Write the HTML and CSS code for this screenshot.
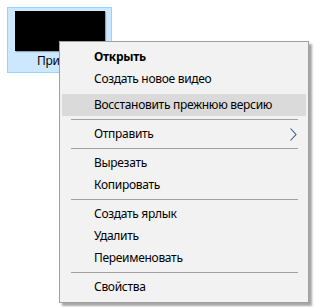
FILE: index.html
```html
<!DOCTYPE html>
<html lang="ru">
<head>
<meta charset="utf-8">
<link rel="stylesheet" href="styles.css">
</head>
<body>
<div class="desktop">
  <div class="icon">
    <div class="thumb"></div>
    <div class="label">Пример</div>
  </div>
  <div class="menu">
    <div class="item bold">Открыть</div>
    <div class="item">Создать новое видео</div>
    <div class="item hover gap">Восстановить прежнюю версию</div>
    <div class="sep"></div>
    <div class="item sub">Отправить
      <svg class="arrow" width="7" height="13" viewBox="0 0 7 13"><polyline points="0.5,0.5 6,6.5 0.5,12.5" fill="none" stroke="#2f5f8f" stroke-width="1.1"/></svg>
    </div>
    <div class="sep"></div>
    <div class="item">Вырезать</div>
    <div class="item">Копировать</div>
    <div class="sep"></div>
    <div class="item">Создать ярлык</div>
    <div class="item">Удалить</div>
    <div class="item">Переименовать</div>
    <div class="sep"></div>
    <div class="item">Свойства</div>
  </div>
</div>
</body>
</html>
```
FILE: styles.css
```css
html, body {
  margin: 0;
  padding: 0;
  background: #ffffff;
}
body {
  font-family: "Noto Sans", "Open Sans", sans-serif;
  font-size: 12px;
  color: #000;
  letter-spacing: -0.3px;
}
.desktop {
  position: relative;
  width: 315px;
  height: 307px;
  overflow: hidden;
}
.icon {
  position: absolute;
  left: 7px;
  top: 7px;
  width: 103px;
  height: 64px;
  background: #cce8ff;
  border: 1px solid #99d1ff;
  display: flex;
  flex-direction: column;
  align-items: center;
}
.thumb {
  margin-top: 3px;
  margin-left: 1px;
  width: 90px;
  height: 40px;
  background: #000;
  box-shadow: 1px 1px 1px rgba(0,0,0,0.3);
}
.label {
  margin-top: 2px;
  line-height: 16px;
  color: #000;
}
.menu {
  position: absolute;
  left: 59px;
  top: 41px;
  width: 244px;
  padding: 4px 2px 4px 2px;
  background: #f2f2f2;
  border: 1px solid #a0a0a0;
  box-shadow: 3px 3px 2px rgba(0,0,0,0.35);
}
.item {
  height: 22px;
  line-height: 22px;
  padding-left: 32px;
  white-space: nowrap;
  position: relative;
}
.bold { font-weight: bold; }
.gap { margin-top: 4px; }
.hover { background: #dadada; }
.sep {
  height: 1px;
  background: #a0a0a0;
  margin: 3px 8px 3px 9px;
}
.arrow {
  position: absolute;
  right: 9px;
  top: 5px;
}
```
